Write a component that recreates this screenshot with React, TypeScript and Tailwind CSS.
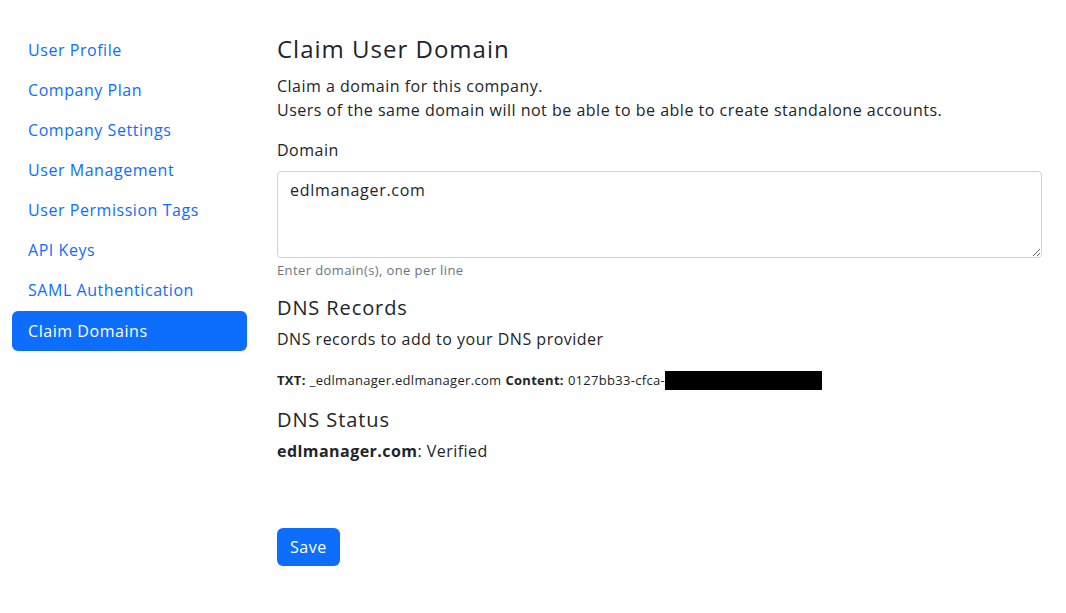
const navItems = [
  "User Profile",
  "Company Plan",
  "Company Settings",
  "User Management",
  "User Permission Tags",
  "API Keys",
  "SAML Authentication",
  "Claim Domains",
];

export default function App() {
  const active = "Claim Domains";

  return (
    <div className="min-h-screen bg-white font-['Open_Sans',sans-serif] text-[#212529]">
      <div className="flex pl-[12px] pt-[30px]">
        <nav className="flex w-[235px] shrink-0 flex-col">
          {navItems.map((item) => (
            <a
              key={item}
              href="#"
              className={
                item === active
                  ? "mt-px rounded-[6px] bg-[#0d6efd] px-4 py-2 text-[16px] leading-6 tracking-[0.55px] text-white"
                  : "px-4 py-2 text-[16px] leading-6 tracking-[0.55px] text-[#0d6efd]"
              }
            >
              {item}
            </a>
          ))}
        </nav>

        <main className="ml-[30px] w-[765px] pt-[4px]">
          <h4 className="mb-[11px] text-[24px] leading-[29px] tracking-[1px]">
            Claim User Domain
          </h4>
          <p className="mb-4 text-[16px] leading-6 tracking-[0.5px]">
            Claim a domain for this company.
            <br />
            Users of the same domain will not be able to be able to create
            standalone accounts.
          </p>

          <label className="mb-[9px] block text-[16px] leading-6 tracking-[0.5px]">
            Domain
          </label>
          <textarea
            defaultValue="edlmanager.com"
            className="block h-[87px] w-full rounded-[4px] border border-[#ced4da] px-3 py-[6px] text-[16px] leading-6 tracking-[0.7px] text-[#212529] outline-none"
          />
          <div className="mt-[3px] text-[13px] leading-[19px] tracking-[0.4px] text-[#6c757d]">
            Enter domain(s), one per line
          </div>

          <h5 className="mt-[16px] text-[20px] leading-6 tracking-[0.9px]">DNS Records</h5>
          <p className="mt-[7px] mb-[20px] text-[16px] leading-6 tracking-[0.5px]">
            DNS records to add to your DNS provider
          </p>
          <div className="flex items-center text-[13px] leading-[19px] tracking-[0.3px]">
            <span className="font-bold">TXT:</span>
            <span className="ml-1">_edlmanager.edlmanager.com</span>
            <span className="ml-1 font-bold">Content:</span>
            <span className="ml-1">0127bb33-cfca-</span>
            <span className="inline-block h-[19px] w-[157px] bg-black" />
          </div>

          <h5 className="mt-[18px] text-[20px] leading-6 tracking-[0.9px]">DNS Status</h5>
          <p className="mt-[7px] text-[16px] leading-6 tracking-[0.45px]">
            <span className="font-bold">edlmanager.com</span>: Verified
          </p>

          <button className="mt-[65px] h-[38px] rounded-[6px] bg-[#0d6efd] px-[13px] text-[16px] leading-6 tracking-[0.5px] text-white">
            Save
          </button>
        </main>
      </div>
    </div>
  );
}
